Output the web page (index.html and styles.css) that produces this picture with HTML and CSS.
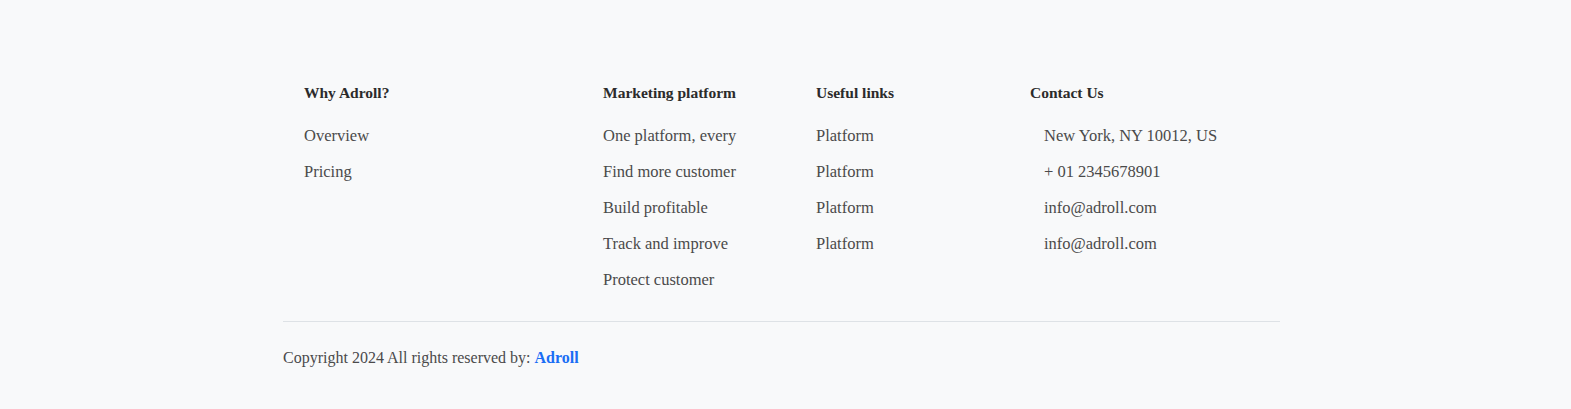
FILE: index.html
```html
<!DOCTYPE html>
<html lang="en">
<head>
<meta charset="utf-8">
<title>Footer</title>
<link rel="stylesheet" href="styles.css">
</head>
<body>
<footer class="footer">
  <div class="container">
    <div class="cols">
      <div class="col col-first">
        <h4 class="col-title">Why Adroll?</h4>
        <ul class="links">
          <li><a href="#">Overview</a></li>
          <li><a href="#">Pricing</a></li>
        </ul>
      </div>
      <div class="col">
        <h4 class="col-title">Marketing platform</h4>
        <ul class="links">
          <li><a href="#">One platform, every</a></li>
          <li><a href="#">Find more customer</a></li>
          <li><a href="#">Build profitable</a></li>
          <li><a href="#">Track and improve</a></li>
          <li><a href="#">Protect customer</a></li>
        </ul>
      </div>
      <div class="col">
        <h4 class="col-title">Useful links</h4>
        <ul class="links">
          <li><a href="#">Platform</a></li>
          <li><a href="#">Platform</a></li>
          <li><a href="#">Platform</a></li>
          <li><a href="#">Platform</a></li>
        </ul>
      </div>
      <div class="col">
        <h4 class="col-title">Contact Us</h4>
        <ul class="links contact">
          <li>New York, NY 10012, US</li>
          <li>+ 01 2345678901</li>
          <li>info@adroll.com</li>
          <li>info@adroll.com</li>
        </ul>
      </div>
    </div>
    <div class="bottom">
      <p class="copy">Copyright 2024 All rights reserved by: <a href="#" class="brand">Adroll</a></p>
    </div>
  </div>
</footer>
</body>
</html>
```

FILE: styles.css
```css
* { box-sizing: border-box; }
html, body {
  margin: 0;
  padding: 0;
  background: #f8f9fa;
}
body {
  font-family: "Liberation Serif", "DejaVu Serif", serif;
  color: #444;
}
.footer {
  padding: 82px 0 30px;
}
.container {
  width: 997px;
  margin: 0 0 0 283px;
}
.cols {
  display: grid;
  grid-template-columns: 320px 213px 214px 1fr;
  padding-bottom: 29px;
  border-bottom: 1px solid #dee2e6;
}
.col-first { padding-left: 21px; }
.col-title {
  margin: 0 0 20px;
  font-size: 15.5px;
  line-height: 22px;
  font-weight: 700;
  color: #2b2b2b;
}
.links {
  list-style: none;
  margin: 0;
  padding: 0;
  display: flex;
  flex-direction: column;
  gap: 12px;
}
.links li {
  font-size: 16.5px;
  line-height: 24px;
}
.links a {
  color: #4a4a4a;
  text-decoration: none;
}
.contact { padding-left: 14px; color: #4a4a4a; }
.bottom { padding-top: 24px; }
.copy {
  margin: 0;
  font-size: 16px;
  line-height: 24px;
  color: #4a4a4a;
}
.brand {
  color: #1a6ef5;
  font-weight: 700;
  text-decoration: none;
}
```
